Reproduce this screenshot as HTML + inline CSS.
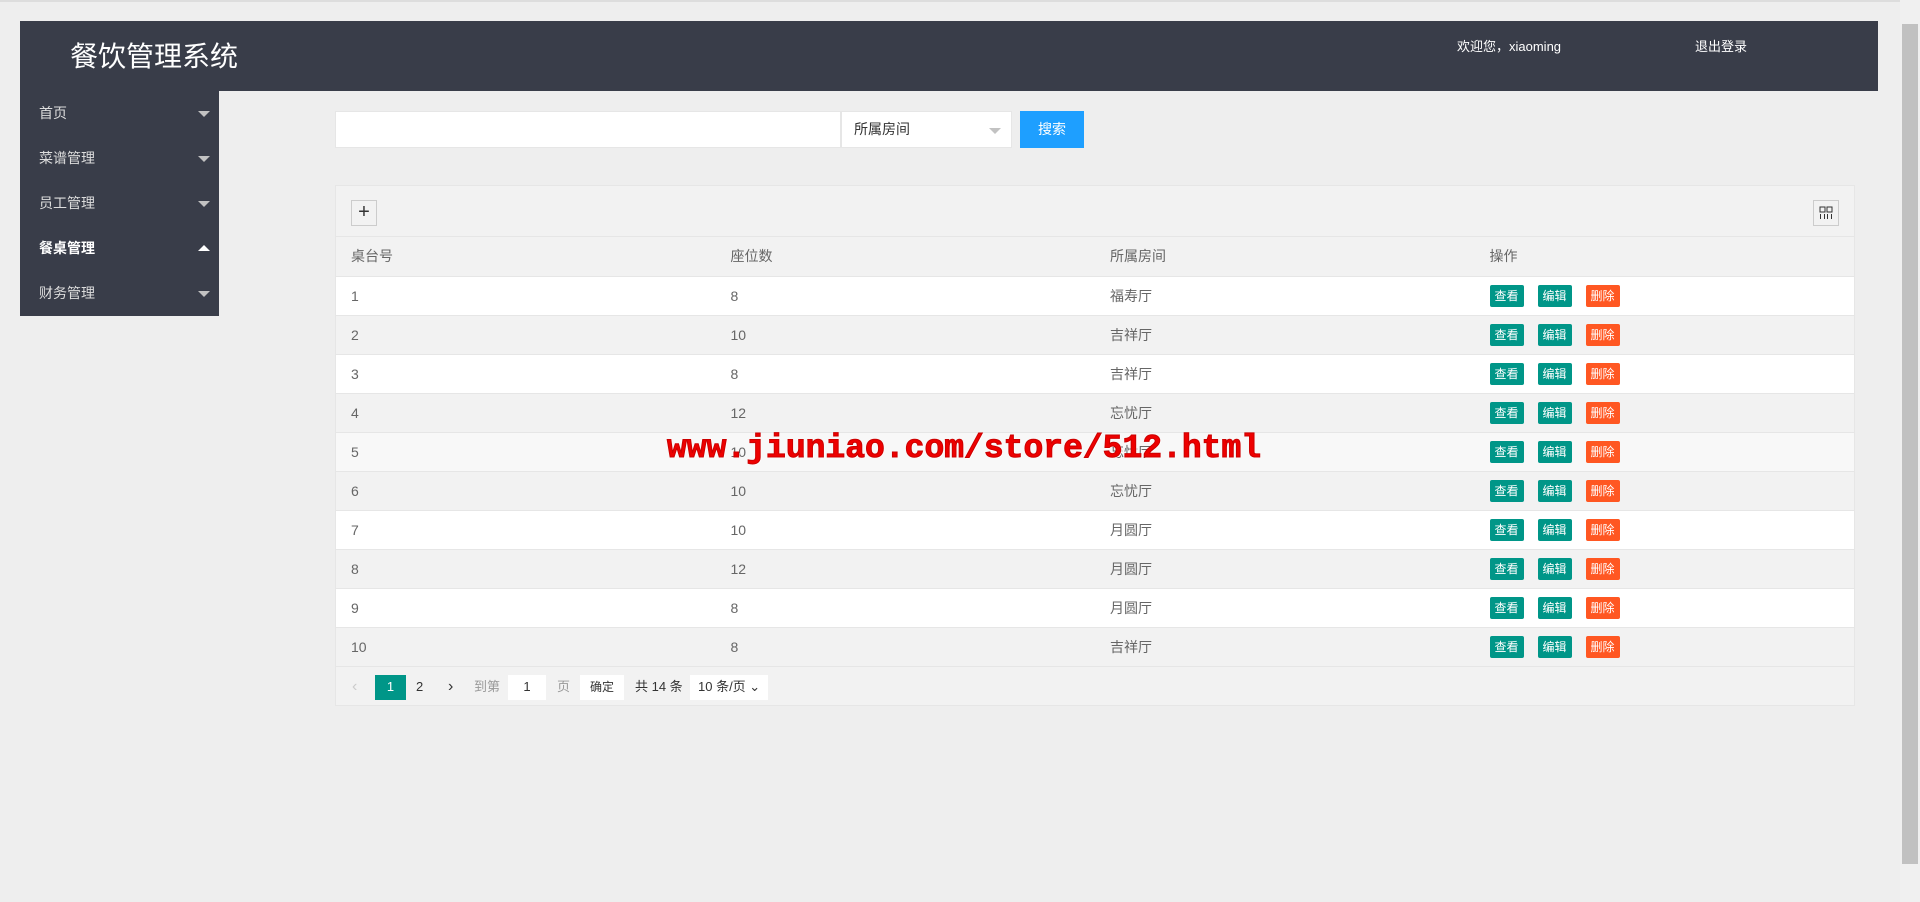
<!DOCTYPE html>
<html><head><meta charset="utf-8"><style>
*{margin:0;padding:0;box-sizing:border-box}
body{width:1920px;height:902px;background:#eeeeee;font-family:"Liberation Sans","Noto Sans CJK SC",sans-serif;position:relative;overflow:hidden;font-size:14px;color:#666}
.topline{position:absolute;left:0;top:0;width:1900px;height:2px;background:#ddd}
.header{position:absolute;left:20px;top:21px;width:1858px;height:70px;background:#393d49}
.title{position:absolute;left:50px;top:14px;color:#fff;font-size:28px}
.welcome{position:absolute;left:1437px;top:15px;color:#fff;font-size:13px}
.logout{position:absolute;left:1675px;top:15px;color:#fff;font-size:13px}
.side{position:absolute;left:20px;top:91px;width:199px;height:225px;background:#393d49}
.side div{height:45px;line-height:45px;padding-left:19px;color:#ddd;font-size:14px;position:relative}
.side div.on{color:#fff;font-weight:bold}
.side div:after{content:"";position:absolute;left:178px;top:20px;border-left:6px solid transparent;border-right:6px solid transparent;border-top:6px solid #c2c2c2}
.side div.on:after{border-top:none;border-bottom:6px solid #fff;top:19px}
.inp{position:absolute;left:335px;top:111px;width:506px;height:37px;background:#fff;border:1px solid #e6e6e6}
.sel{position:absolute;left:841px;top:111px;width:171px;height:37px;background:#fff;border:1px solid #e6e6e6;padding-left:12px;line-height:35px;color:#333;font-size:14px}
.sel:after{content:"";position:absolute;right:10px;top:16px;border-left:6px solid transparent;border-right:6px solid transparent;border-top:6px solid #c2c2c2}
.btn{position:absolute;left:1020px;top:111px;width:64px;height:37px;background:#1e9fff;color:#fff;line-height:37px;text-align:center;font-size:14px}
.panel{position:absolute;left:335px;top:185px;width:1520px;height:521px;background:#f2f2f2;border:1px solid #e6e6e6}
.tool{height:51px;border-bottom:1px solid #e6e6e6;position:relative}
.plus{position:absolute;left:15px;top:14px;width:26px;height:26px;border:1px solid #ccc;text-align:center;line-height:23px;font-size:20px;color:#333}
.cols{position:absolute;right:15px;top:14px;width:26px;height:26px;border:1px solid #ccc}
table{border-collapse:collapse;width:100%}
td{height:39px;padding-left:15px;border-bottom:1px solid #e6e6e6;color:#666;font-size:14px;width:379px}
tr.w td{background:#fff}
tr.h td{background:#f8f8f8}
.b{display:inline-block;width:34px;height:22px;line-height:22px;text-align:center;color:#fff;font-size:12px;margin-right:14px;border-radius:2px;background:#009688}
.b.r{background:#ff5722}
.pg{height:40px;position:relative;font-size:13px}
.pg span{position:absolute;top:8px;line-height:24px}
.wm{position:absolute;left:667px;top:430px;font-family:"Liberation Mono",monospace;font-weight:bold;font-size:33px;color:#e00;-webkit-text-stroke:1px #c00;text-shadow:1px 1px 0 #fff;letter-spacing:0}
.sb{position:absolute;left:1900px;top:0;width:20px;height:902px;background:#f0f0f0}
.sb div{position:absolute;left:2px;top:24px;width:16px;height:840px;background:#c1c1c1}
</style></head><body>
<div class="topline"></div>
<div class="header"><div class="title">餐饮管理系统</div><div class="welcome">欢迎您，xiaoming</div><div class="logout">退出登录</div></div>
<div class="side"><div>首页</div><div>菜谱管理</div><div>员工管理</div><div class="on">餐桌管理</div><div>财务管理</div></div>
<div class="inp"></div><div class="sel">所属房间</div><div class="btn">搜索</div>
<div class="panel">
<div class="tool"><div class="plus">+</div><div class="cols"><svg width="24" height="24" viewBox="0 0 24 24"><rect x="6" y="6" width="5" height="5" fill="none" stroke="#333"/><rect x="13" y="6" width="5" height="5" fill="none" stroke="#333"/><path d="M6.5 13v5M10.5 13v5M13.5 13v5M17.5 13v5" stroke="#333"/></svg></div></div>
<table>
<tr><td>桌台号</td><td>座位数</td><td>所属房间</td><td>操作</td></tr>
<tr class="w"><td>1</td><td>8</td><td>福寿厅</td><td><span class="b">查看</span><span class="b">编辑</span><span class="b r">删除</span></td></tr>
<tr><td>2</td><td>10</td><td>吉祥厅</td><td><span class="b">查看</span><span class="b">编辑</span><span class="b r">删除</span></td></tr>
<tr class="w"><td>3</td><td>8</td><td>吉祥厅</td><td><span class="b">查看</span><span class="b">编辑</span><span class="b r">删除</span></td></tr>
<tr><td>4</td><td>12</td><td>忘忧厅</td><td><span class="b">查看</span><span class="b">编辑</span><span class="b r">删除</span></td></tr>
<tr class="h"><td>5</td><td>10</td><td>忘忧厅</td><td><span class="b">查看</span><span class="b">编辑</span><span class="b r">删除</span></td></tr>
<tr><td>6</td><td>10</td><td>忘忧厅</td><td><span class="b">查看</span><span class="b">编辑</span><span class="b r">删除</span></td></tr>
<tr class="w"><td>7</td><td>10</td><td>月圆厅</td><td><span class="b">查看</span><span class="b">编辑</span><span class="b r">删除</span></td></tr>
<tr><td>8</td><td>12</td><td>月圆厅</td><td><span class="b">查看</span><span class="b">编辑</span><span class="b r">删除</span></td></tr>
<tr class="w"><td>9</td><td>8</td><td>月圆厅</td><td><span class="b">查看</span><span class="b">编辑</span><span class="b r">删除</span></td></tr>
<tr><td>10</td><td>8</td><td>吉祥厅</td><td><span class="b">查看</span><span class="b">编辑</span><span class="b r">删除</span></td></tr>
</table>
<div class="pg">
<span style="left:16px;color:#ccc;font-size:16px">&lsaquo;</span>
<span style="left:39px;width:31px;height:25px;background:#009688;color:#fff;text-align:center">1</span>
<span style="left:80px;color:#333">2</span>
<span style="left:112px;color:#333;font-size:16px">&rsaquo;</span>
<span style="left:138px;color:#999">到第</span>
<span style="left:172px;width:38px;height:25px;background:#fff;text-align:center;color:#333">1</span>
<span style="left:221px;color:#999">页</span>
<span style="left:244px;width:44px;height:25px;background:#fff;text-align:center;color:#333;font-size:12px">确定</span>
<span style="left:299px;color:#333">共 14 条</span>
<span style="left:354px;width:78px;height:25px;background:#fff;padding-left:8px;color:#333">10 条/页 ⌄</span>
</div>
</div>
<div class="wm">www.jiuniao.com/store/512.html</div>
<div class="sb"><div></div></div>
</body></html>
